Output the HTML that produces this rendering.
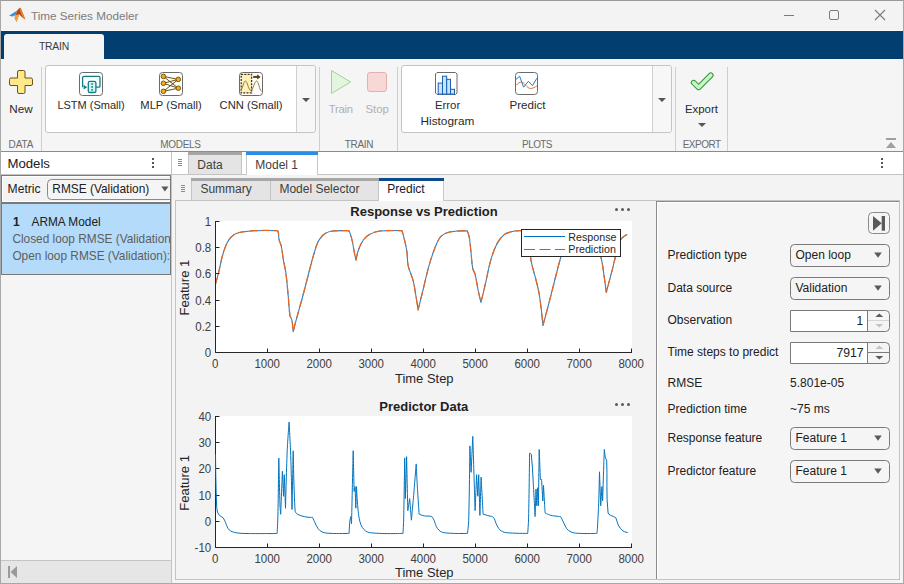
<!DOCTYPE html>
<html><head><meta charset="utf-8">
<style>
html,body{margin:0;padding:0;width:904px;height:584px;overflow:hidden;background:#f5f5f5}
svg{position:absolute;left:0;top:0;display:block}
text{font-family:"Liberation Sans",sans-serif}
</style></head>
<body>
<svg width="904" height="584" viewBox="0 0 904 584">
<!-- ===== window & title bar ===== -->
<rect x="0" y="0" width="904" height="584" fill="#f5f5f5"/>
<rect x="0" y="0" width="904" height="31" fill="#f3f3f3"/>
<rect x="0" y="30" width="904" height="1" fill="#fafafa"/>
<!-- matlab logo -->
<path d="M9 15.8 L14 12.6 L17.2 10.4 L15.6 15 L12.6 16.6 Z" fill="#3d8fd8"/>
<path d="M17.2 10.4 L19.3 7.9 Q20.3 7.3 21 8.8 L25.3 19.6 L22 17.2 L19.2 14.2 L16.5 22 L14.6 17.6 L15.6 15 Z" fill="#b8431a"/>
<path d="M19.3 7.9 Q20.3 7.3 21 8.8 L25.3 19.6 L22.6 17.6 L20.2 11.5 Z" fill="#e5802c"/>
<path d="M15.6 15 L19.2 14.2 L16.5 22 L14.6 17.6 Z" fill="#f2a43a"/>
<text x="31" y="20" font-size="11.7" fill="#7c7c7c">Time Series Modeler</text>
<!-- window controls -->
<rect x="784" y="15" width="10" height="1" fill="#7a7a7a"/>
<rect x="829.5" y="10.5" width="9" height="9" rx="1.5" fill="none" stroke="#7a7a7a" stroke-width="1"/>
<path d="M875 10 L885 20 M885 10 L875 20" stroke="#7a7a7a" stroke-width="1.1"/>

<!-- ===== blue tab strip ===== -->
<rect x="1" y="31" width="902" height="28" fill="#023e70"/>
<path d="M4 59 V37 Q4 34 7 34 H101 Q104 34 104 37 V59 Z" fill="#f5f5f5"/>
<text x="54" y="49.6" font-size="10.4" fill="#3a3a3a" text-anchor="middle" letter-spacing="-0.2">TRAIN</text>

<!-- ===== toolstrip ===== -->
<rect x="1" y="59" width="902" height="92" fill="#f5f5f5"/>
<rect x="1" y="151" width="902" height="1" fill="#8c8c8c"/>
<!-- separators -->
<rect x="41" y="67" width="1" height="84" fill="#cfcfcf"/>
<rect x="319" y="67" width="1" height="84" fill="#cfcfcf"/>
<rect x="397" y="67" width="1" height="84" fill="#cfcfcf"/>
<rect x="675" y="67" width="1" height="84" fill="#cfcfcf"/>
<rect x="727" y="67" width="1" height="84" fill="#cfcfcf"/>

<!-- DATA section -->
<path d="M17.5 72 Q17.5 70.5 19 70.5 H23.5 Q25 70.5 25 72 V78 H31 Q32.5 78 32.5 79.5 V84 Q32.5 85.5 31 85.5 H25 V92 Q25 93.5 23.5 93.5 H19 Q17.5 93.5 17.5 92 V85.5 H11 Q9.5 85.5 9.5 84 V79.5 Q9.5 78 11 78 H17.5 Z" fill="#fde88a" stroke="#6e5212" stroke-width="1"/>
<text x="21" y="112.7" font-size="11.7" fill="#2a2a2a" text-anchor="middle">New</text>
<text x="21" y="147.6" font-size="10" fill="#6a6a6a" text-anchor="middle" letter-spacing="-0.1">DATA</text>

<!-- MODELS gallery -->
<rect x="45.5" y="65.5" width="270" height="67" rx="2.5" fill="#ffffff" stroke="#c4c4c4"/>
<path d="M296 66 H312 Q315 66 315 69 V129 Q315 132 312 132 H296 Z" fill="#f7f7f7"/>
<rect x="296" y="66" width="1" height="66" fill="#d0d0d0"/>
<path d="M302 98 H310 L306 102 Z" fill="#555"/>

<!-- LSTM icon -->
<g transform="translate(79,72)">
  <rect x="0.5" y="0.5" width="23" height="23" rx="3" fill="#fff" stroke="#6a6a6a"/>
  <path d="M3.6 15.2 V5.8 Q3.6 4.4 5 4.4 H19.6 Q21 4.4 21 5.8 V14.2 Q21 15.2 20 15.2 H17" fill="none" stroke="#0f7f87" stroke-width="1.3"/>
  <path d="M4.6 12.8 L8.2 15.2 L4.6 17.6 Z" fill="#0f7f87"/>
  <rect x="9.3" y="9.3" width="7.6" height="11.2" rx="1.6" fill="#d6f4f4" stroke="#0f7f87" stroke-width="1.3"/>
  <rect x="12.3" y="11.2" width="1.6" height="1.6" fill="#0f7f87"/>
  <rect x="12.3" y="14.2" width="1.6" height="1.6" fill="#0f7f87"/>
  <rect x="12.3" y="17.1" width="1.6" height="1.6" fill="#0f7f87"/>
</g>
<text x="91" y="108.8" font-size="11" fill="#2a2a2a" text-anchor="middle">LSTM (Small)</text>

<!-- MLP icon -->
<g transform="translate(159,72)">
  <rect x="0.5" y="0.5" width="23" height="23" rx="3" fill="#fff" stroke="#6a6a6a"/>
  <g stroke="#5e4408" stroke-width="0.95" fill="none">
    <path d="M4.4 4.4 L19.3 7.4 M4.4 4.4 L19.3 16.2 M4.4 11.3 L19.3 7.4 M4.4 11.3 L19.3 16.2 M4.4 19.3 L19.3 7.4 M4.4 19.3 L19.3 16.2"/>
  </g>
  <g fill="#f0ae1a" stroke="#6a4c00" stroke-width="0.9">
    <circle cx="4.4" cy="4.4" r="2.3"/><circle cx="4.4" cy="11.3" r="2.3"/><circle cx="4.4" cy="19.3" r="2.3"/>
    <circle cx="19.3" cy="7.4" r="2.3"/><circle cx="19.3" cy="16.2" r="2.3"/>
  </g>
</g>
<text x="171" y="108.8" font-size="11.2" fill="#2a2a2a" text-anchor="middle">MLP (Small)</text>

<!-- CNN icon -->
<g transform="translate(239,72)">
  <rect x="0.5" y="0.5" width="23" height="23" rx="3" fill="#fff" stroke="#6a6a6a"/>
  <rect x="2.2" y="2.4" width="10.4" height="18.5" fill="#fdf0b8" stroke="#4a3208" stroke-width="1.3" stroke-dasharray="2 1.2"/>
  <path d="M1.5 18.5 C3.5 18 4.5 9 6.4 9 C8.3 9 9.5 18.5 12 18.5 C14 18.5 15.5 9 17.5 9 C19.5 9 20.5 18 22.6 19.5" fill="none" stroke="#8a7030" stroke-width="0.9"/>
  <path d="M14.2 4.9 H19" stroke="#5a3e0c" stroke-width="2"/>
  <path d="M18.2 2.3 L21.6 4.9 L18.2 7.5 Z" fill="#5a3e0c"/>
</g>
<text x="251" y="108.8" font-size="11.2" fill="#2a2a2a" text-anchor="middle">CNN (Small)</text>
<text x="180.5" y="147.6" font-size="10" fill="#6a6a6a" text-anchor="middle" letter-spacing="-0.3">MODELS</text>

<!-- TRAIN section -->
<path d="M331.5 70.5 L350.5 82 L331.5 93.5 Z" fill="#e3f5de" stroke="#9fd394" stroke-width="1"/>
<rect x="367.5" y="72.5" width="19" height="19" rx="2.5" fill="#f8d7d7" stroke="#e6b0b0"/>
<text x="340.8" y="112.7" font-size="11.3" fill="#b0b0b0" text-anchor="middle" letter-spacing="-0.2">Train</text>
<text x="377.2" y="112.7" font-size="11.4" fill="#b0b0b0" text-anchor="middle">Stop</text>
<text x="359" y="147.6" font-size="10" fill="#6a6a6a" text-anchor="middle" letter-spacing="-0.3">TRAIN</text>

<!-- PLOTS gallery -->
<rect x="401.5" y="65.5" width="270" height="67" rx="2.5" fill="#ffffff" stroke="#c4c4c4"/>
<path d="M652 66 H668 Q671 66 671 69 V129 Q671 132 668 132 H652 Z" fill="#f7f7f7"/>
<rect x="652" y="66" width="1" height="66" fill="#d0d0d0"/>
<path d="M658 98 H666 L662 102 Z" fill="#555"/>
<!-- histogram icon -->
<g transform="translate(435,72)">
  <path d="M0.5 2 L2 0.5 H20.5 L22 2 V21 L20.5 22.5 H2 L0.5 21 Z" fill="#fff" stroke="#6a6a6a"/>
  <g fill="#c6e4fb" stroke="#1a5fb4" stroke-width="1">
    <rect x="3.2" y="11.1" width="4.3" height="11"/>
    <rect x="7.5" y="4.2" width="4.2" height="17.9"/>
    <rect x="11.7" y="7.3" width="3.8" height="14.8"/>
    <rect x="15.5" y="17.3" width="4" height="4.8"/>
  </g>
</g>
<text x="447.6" y="108.7" font-size="11.4" fill="#2a2a2a" text-anchor="middle">Error</text>
<text x="447.4" y="125.1" font-size="11.8" fill="#2a2a2a" text-anchor="middle">Histogram</text>
<!-- predict icon -->
<g transform="translate(515,72)">
  <rect x="0.5" y="0.5" width="22" height="22" rx="3" fill="#fff" stroke="#6a6a6a"/>
  <path d="M1.1 13.4 C3 11 5 10.1 6.5 10.1 C9.5 10.1 12 16.5 15.5 16.5 C18 16.5 20 15 21.9 14" fill="none" stroke="#e0703c" stroke-width="1"/>
  <path d="M0.9 7.5 L4.6 4.2 L8.6 15.2 L13.4 9.3 L17.5 13.7 L21.9 6.2" fill="none" stroke="#1f7fd0" stroke-width="1"/>
</g>
<text x="527.5" y="108.7" font-size="11.6" fill="#2a2a2a" text-anchor="middle">Predict</text>
<text x="537" y="147.6" font-size="10" fill="#6a6a6a" text-anchor="middle" letter-spacing="-0.6">PLOTS</text>

<!-- EXPORT section -->
<path d="M693.6 82.6 L698.6 87.4 L710.8 75.2" fill="none" stroke="#34903e" stroke-width="5.6" stroke-linecap="round" stroke-linejoin="round"/>
<path d="M693.6 82.6 L698.6 87.4 L710.8 75.2" fill="none" stroke="#c8f6c2" stroke-width="3.6" stroke-linecap="round" stroke-linejoin="round"/>
<text x="701.4" y="112.7" font-size="11.4" fill="#2a2a2a" text-anchor="middle">Export</text>
<path d="M698 123 H706 L702 127 Z" fill="#555"/>
<text x="701.6" y="147.6" font-size="10" fill="#6a6a6a" text-anchor="middle" letter-spacing="-0.5">EXPORT</text>
<!-- collapse -->
<rect x="886" y="138" width="10" height="2" fill="#a0a0a0"/>
<path d="M886 148 L891 142 L896 148 Z" fill="#a0a0a0"/>

<!-- ===== left panel ===== -->
<rect x="1" y="152" width="170" height="22" fill="#ffffff"/>
<text x="7.4" y="167.8" font-size="13.2" fill="#212121">Models</text>
<rect x="152" y="158" width="2" height="2" fill="#555"/>
<rect x="152" y="162" width="2" height="2" fill="#555"/>
<rect x="152" y="166" width="2" height="2" fill="#555"/>
<rect x="1" y="174" width="903" height="1" fill="#c4c4c4"/>
<!-- metric box -->
<rect x="1" y="175" width="170" height="28" fill="#7a7a7a"/>
<rect x="2" y="176" width="168" height="26" fill="#ffffff"/>
<rect x="3" y="177" width="167" height="24" fill="#f3f3f3"/>
<text x="7.6" y="192.8" font-size="12.1" fill="#212121">Metric</text>
<rect x="47.5" y="179.5" width="135" height="20" rx="4" fill="#f5f5f5" stroke="#8a8a8a"/>
<text x="52.3" y="193" font-size="11.9" fill="#212121">RMSE (Validation)</text>
<path d="M161.3 186.4 H168.5 L164.9 191.4 Z" fill="#5a5a5a"/>
<rect x="170" y="175" width="1" height="28" fill="#7a7a7a"/>
<!-- list item -->
<rect x="1" y="203" width="170" height="72" fill="#7a7a7a"/>
<rect x="2" y="204" width="168" height="70" fill="#b4dcfa"/>
<g clip-path="url(#clipL)">
<text x="13" y="225.8" font-size="12" font-weight="bold" fill="#212121">1</text>
<text x="31.5" y="225.8" font-size="11.85" fill="#212121">ARMA Model</text>
<text x="12.4" y="242.5" font-size="11.85" fill="#5e5e5e">Closed loop RMSE (Validation)</text>
<text x="12.4" y="259.6" font-size="11.85" fill="#5e5e5e">Open loop RMSE (Validation): </text>
</g>
<clipPath id="clipL"><rect x="2" y="204" width="168" height="70"/></clipPath>
<!-- bottom bar -->
<rect x="1" y="560" width="170" height="1" fill="#c4c4c4"/>
<rect x="1" y="561" width="170" height="22" fill="#e6e6e6"/>
<rect x="8" y="566" width="2" height="12" fill="#9a9a9a"/>
<path d="M17 566 L10.5 572 L17 578 Z" fill="#9a9a9a"/>
<rect x="171" y="152" width="1" height="432" fill="#c4c4c4"/>

<!-- ===== document tabs ===== -->
<rect x="172" y="152" width="731" height="22" fill="#ffffff"/>
<g fill="#8c8c8c"><rect x="178" y="159" width="4" height="1"/><rect x="178" y="161" width="4" height="1"/><rect x="178" y="163" width="4" height="1"/><rect x="178" y="165" width="4" height="1"/></g>
<rect x="188" y="152" width="54" height="22" fill="#c4c4c4"/>
<rect x="189" y="155" width="52" height="19" fill="#e4e4e4"/>
<rect x="188" y="152" width="54" height="3" fill="#a6a6a6"/>
<text x="197.3" y="168.7" font-size="12" fill="#404040">Data</text>
<rect x="246" y="152" width="72" height="22" fill="#c8c8c8"/>
<rect x="247" y="155" width="70" height="20" fill="#ffffff"/>
<rect x="246" y="152" width="72" height="3" fill="#2b8de3"/>
<text x="255.3" y="168.7" font-size="12" fill="#404040">Model 1</text>
<g fill="#555"><rect x="881" y="158" width="2" height="2"/><rect x="881" y="162" width="2" height="2"/><rect x="881" y="166" width="2" height="2"/></g>

<!-- sub tabs -->
<rect x="172" y="175" width="731" height="25" fill="#f3f3f3"/>
<g fill="#8c8c8c"><rect x="181" y="185" width="4" height="1"/><rect x="181" y="187" width="4" height="1"/><rect x="181" y="189" width="4" height="1"/><rect x="181" y="191" width="4" height="1"/></g>
<rect x="191" y="178" width="80" height="22" fill="#c4c4c4"/>
<rect x="192" y="181" width="78" height="19" fill="#e4e4e4"/>
<rect x="191" y="178" width="80" height="3" fill="#a6a6a6"/>
<text x="200.4" y="192.8" font-size="12" fill="#404040">Summary</text>
<rect x="270" y="178" width="109" height="22" fill="#c4c4c4"/>
<rect x="271" y="181" width="107" height="19" fill="#e4e4e4"/>
<rect x="270" y="178" width="109" height="3" fill="#a6a6a6"/>
<text x="279.4" y="192.8" font-size="12" fill="#404040">Model Selector</text>
<rect x="379" y="178" width="65" height="23" fill="#c8c8c8"/>
<rect x="379" y="181" width="64" height="20" fill="#ffffff"/>
<rect x="379" y="178" width="65" height="3" fill="#0b4a8b"/>
<text x="387.3" y="192.8" font-size="12" fill="#1a1a2a">Predict</text>

<!-- ===== plot panel ===== -->
<rect x="175" y="200" width="725" height="380" fill="#c4c4c4"/>
<rect x="176" y="201" width="723" height="378" fill="#f3f3f3"/>
<rect x="379" y="200" width="64" height="1" fill="#ffffff"/>

<!-- plot 1 -->
<rect x="215.5" y="221" width="416.5" height="131.5" fill="#ffffff"/>
<text x="424" y="216.2" font-size="13" font-weight="bold" fill="#212121" text-anchor="middle">Response vs Prediction</text>
<g fill="#5a5a5a"><circle cx="616.5" cy="209.5" r="1.5"/><circle cx="622.5" cy="209.5" r="1.5"/><circle cx="628.5" cy="209.5" r="1.5"/></g>
<g clip-path="url(#clipA1)">
<path d="M215.0 285.8 C215.0 285.8 217.6 276.7 218.7 272.1 C220.0 266.8 220.9 261.3 222.4 256.0 C223.8 251.3 225.1 246.6 227.4 242.3 C228.9 239.5 231.0 236.7 233.6 234.9 C236.1 233.1 239.3 232.5 242.3 231.9 C246.4 231.1 250.5 230.8 254.7 230.7 C262.2 230.4 269.7 230.2 277.1 230.7 C277.8 230.7 278.2 231.7 278.3 232.4 C278.8 234.8 278.6 237.4 279.1 239.8 C279.6 241.9 280.8 243.9 281.3 246.0 C282.3 250.5 282.5 255.2 283.3 259.7 C284.0 263.9 285.2 267.9 285.8 272.1 C286.9 280.4 287.5 288.7 288.3 297.0 C288.9 303.2 289.0 309.4 290.0 315.6 C290.3 317.4 291.7 318.8 292.0 320.6 C292.7 324.3 293.2 331.8 293.2 331.8 C293.2 331.8 294.8 325.1 295.7 321.8 C298.1 312.7 300.8 303.6 303.2 294.5 C306.2 283.4 308.9 272.1 311.9 261.0 C313.4 255.6 314.9 250.1 316.8 244.8 C317.6 242.6 318.6 240.5 320.0 238.6 C321.4 236.7 323.0 234.8 325.0 233.6 C327.2 232.3 329.8 231.4 332.4 231.1 C337.8 230.4 348.6 230.7 348.6 230.7 C348.6 230.7 349.6 231.7 349.8 232.4 C350.8 235.2 351.6 238.2 352.3 241.1 C353.1 244.8 353.6 248.6 354.3 252.3 C354.8 254.9 356.0 260.2 356.0 260.2 C356.0 260.2 357.3 253.1 358.5 249.8 C359.8 246.3 361.3 242.8 363.5 239.8 C365.1 237.6 367.3 235.7 369.7 234.4 C372.8 232.7 376.1 231.5 379.6 231.1 C387.0 230.3 402.0 230.7 402.0 230.7 C402.0 230.7 403.8 236.7 404.5 239.8 C405.5 243.9 406.4 248.1 407.0 252.3 C407.6 256.8 407.2 261.5 408.2 265.9 C409.3 271.0 411.9 275.7 413.2 280.8 C414.4 285.3 414.9 289.9 415.7 294.5 C416.6 299.6 418.1 309.9 418.1 309.9 C418.1 309.9 420.6 299.6 421.9 294.5 C424.4 284.6 426.5 274.5 429.3 264.7 C431.2 258.0 433.5 251.3 436.2 244.8 C437.5 241.7 438.8 238.4 441.2 236.1 C443.5 233.9 446.7 232.6 449.9 231.9 C455.6 230.7 467.3 230.7 467.3 230.7 C467.3 230.7 468.9 235.1 469.3 237.4 C470.1 242.3 470.5 247.3 471.0 252.3 C471.6 257.7 471.7 263.1 472.7 268.4 C473.1 270.6 474.7 272.4 475.2 274.6 C476.4 279.5 477.0 284.5 478.0 289.5 C478.9 293.8 480.9 302.5 480.9 302.5 C480.9 302.5 483.5 292.2 484.7 287.0 C486.8 277.9 488.3 268.7 490.9 259.7 C492.5 254.2 494.4 248.7 497.1 243.6 C499.0 240.1 501.3 236.7 504.5 234.4 C507.4 232.4 511.1 231.8 514.5 231.1 C516.9 230.6 519.4 230.8 521.9 230.7 C523.9 230.6 528.0 230.7 528.0 230.7 C528.0 230.7 529.0 240.2 529.5 245.0 C529.9 249.1 530.1 253.1 530.6 257.2 C530.9 259.7 531.3 262.2 531.9 264.7 C533.0 269.3 534.5 273.8 535.6 278.4 C536.9 283.7 538.4 289.1 539.3 294.5 C540.9 304.7 543.0 325.4 543.0 325.4 C543.0 325.4 547.6 308.1 549.9 299.4 C553.7 284.9 557.0 270.4 561.1 256.0 C562.4 251.5 563.9 247.1 566.0 243.0 C567.5 240.0 569.4 237.1 572.0 235.0 C574.2 233.2 577.1 232.0 580.0 231.5 C585.9 230.5 598.0 230.7 598.0 230.7 C598.0 230.7 599.6 238.2 600.0 242.0 C600.5 246.6 600.3 251.4 600.8 256.0 C601.1 258.9 602.1 261.7 602.5 264.6 C603.9 273.8 606.3 292.4 606.3 292.4 C606.3 292.4 610.1 278.0 612.0 270.8 C613.3 265.9 614.3 260.9 615.7 256.0 C617.2 250.6 618.3 245.0 620.6 239.8 C621.3 238.2 623.0 237.2 624.4 236.1 C625.3 235.4 627.3 234.4 627.3 234.4" fill="none" stroke="#1a7fd0" stroke-width="1.05" stroke-linejoin="round"/>
<path d="M215.0 285.8 C215.0 285.8 217.6 276.7 218.7 272.1 C220.0 266.8 220.9 261.3 222.4 256.0 C223.8 251.3 225.1 246.6 227.4 242.3 C228.9 239.5 231.0 236.7 233.6 234.9 C236.1 233.1 239.3 232.5 242.3 231.9 C246.4 231.1 250.5 230.8 254.7 230.7 C262.2 230.4 269.7 230.2 277.1 230.7 C277.8 230.7 278.2 231.7 278.3 232.4 C278.8 234.8 278.6 237.4 279.1 239.8 C279.6 241.9 280.8 243.9 281.3 246.0 C282.3 250.5 282.5 255.2 283.3 259.7 C284.0 263.9 285.2 267.9 285.8 272.1 C286.9 280.4 287.5 288.7 288.3 297.0 C288.9 303.2 289.0 309.4 290.0 315.6 C290.3 317.4 291.7 318.8 292.0 320.6 C292.7 324.3 293.2 331.8 293.2 331.8 C293.2 331.8 294.8 325.1 295.7 321.8 C298.1 312.7 300.8 303.6 303.2 294.5 C306.2 283.4 308.9 272.1 311.9 261.0 C313.4 255.6 314.9 250.1 316.8 244.8 C317.6 242.6 318.6 240.5 320.0 238.6 C321.4 236.7 323.0 234.8 325.0 233.6 C327.2 232.3 329.8 231.4 332.4 231.1 C337.8 230.4 348.6 230.7 348.6 230.7 C348.6 230.7 349.6 231.7 349.8 232.4 C350.8 235.2 351.6 238.2 352.3 241.1 C353.1 244.8 353.6 248.6 354.3 252.3 C354.8 254.9 356.0 260.2 356.0 260.2 C356.0 260.2 357.3 253.1 358.5 249.8 C359.8 246.3 361.3 242.8 363.5 239.8 C365.1 237.6 367.3 235.7 369.7 234.4 C372.8 232.7 376.1 231.5 379.6 231.1 C387.0 230.3 402.0 230.7 402.0 230.7 C402.0 230.7 403.8 236.7 404.5 239.8 C405.5 243.9 406.4 248.1 407.0 252.3 C407.6 256.8 407.2 261.5 408.2 265.9 C409.3 271.0 411.9 275.7 413.2 280.8 C414.4 285.3 414.9 289.9 415.7 294.5 C416.6 299.6 418.1 309.9 418.1 309.9 C418.1 309.9 420.6 299.6 421.9 294.5 C424.4 284.6 426.5 274.5 429.3 264.7 C431.2 258.0 433.5 251.3 436.2 244.8 C437.5 241.7 438.8 238.4 441.2 236.1 C443.5 233.9 446.7 232.6 449.9 231.9 C455.6 230.7 467.3 230.7 467.3 230.7 C467.3 230.7 468.9 235.1 469.3 237.4 C470.1 242.3 470.5 247.3 471.0 252.3 C471.6 257.7 471.7 263.1 472.7 268.4 C473.1 270.6 474.7 272.4 475.2 274.6 C476.4 279.5 477.0 284.5 478.0 289.5 C478.9 293.8 480.9 302.5 480.9 302.5 C480.9 302.5 483.5 292.2 484.7 287.0 C486.8 277.9 488.3 268.7 490.9 259.7 C492.5 254.2 494.4 248.7 497.1 243.6 C499.0 240.1 501.3 236.7 504.5 234.4 C507.4 232.4 511.1 231.8 514.5 231.1 C516.9 230.6 519.4 230.8 521.9 230.7 C523.9 230.6 528.0 230.7 528.0 230.7 C528.0 230.7 529.0 240.2 529.5 245.0 C529.9 249.1 530.1 253.1 530.6 257.2 C530.9 259.7 531.3 262.2 531.9 264.7 C533.0 269.3 534.5 273.8 535.6 278.4 C536.9 283.7 538.4 289.1 539.3 294.5 C540.9 304.7 543.0 325.4 543.0 325.4 C543.0 325.4 547.6 308.1 549.9 299.4 C553.7 284.9 557.0 270.4 561.1 256.0 C562.4 251.5 563.9 247.1 566.0 243.0 C567.5 240.0 569.4 237.1 572.0 235.0 C574.2 233.2 577.1 232.0 580.0 231.5 C585.9 230.5 598.0 230.7 598.0 230.7 C598.0 230.7 599.6 238.2 600.0 242.0 C600.5 246.6 600.3 251.4 600.8 256.0 C601.1 258.9 602.1 261.7 602.5 264.6 C603.9 273.8 606.3 292.4 606.3 292.4 C606.3 292.4 610.1 278.0 612.0 270.8 C613.3 265.9 614.3 260.9 615.7 256.0 C617.2 250.6 618.3 245.0 620.6 239.8 C621.3 238.2 623.0 237.2 624.4 236.1 C625.3 235.4 627.3 234.4 627.3 234.4" fill="none" stroke="#e8661e" stroke-width="1.25" stroke-dasharray="8 4" stroke-linejoin="round"/>
</g>
<clipPath id="clipA1"><rect x="215" y="221" width="418" height="132"/></clipPath>
<path d="M215.5 221 V352.5 H632 M215.5 352.5 V348.5 M267.5 352.5 V348.5 M319.5 352.5 V348.5 M371.5 352.5 V348.5 M423.5 352.5 V348.5 M475.5 352.5 V348.5 M527.5 352.5 V348.5 M579.5 352.5 V348.5 M631.5 352.5 V348.5  M215.5 352.5 H219.5 M215.5 326.5 H219.5 M215.5 300.5 H219.5 M215.5 273.5 H219.5 M215.5 247.5 H219.5 M215.5 221.5 H219.5 " fill="none" stroke="#262626" stroke-width="1"/>
<g font-size="13.2" fill="#404040"><text transform="translate(215.2,368.1) scale(0.87,1)" text-anchor="middle">0</text><text transform="translate(267.2,368.1) scale(0.87,1)" text-anchor="middle">1000</text><text transform="translate(319.2,368.1) scale(0.87,1)" text-anchor="middle">2000</text><text transform="translate(371.2,368.1) scale(0.87,1)" text-anchor="middle">3000</text><text transform="translate(423.2,368.1) scale(0.87,1)" text-anchor="middle">4000</text><text transform="translate(475.2,368.1) scale(0.87,1)" text-anchor="middle">5000</text><text transform="translate(527.2,368.1) scale(0.87,1)" text-anchor="middle">6000</text><text transform="translate(579.2,368.1) scale(0.87,1)" text-anchor="middle">7000</text><text transform="translate(631.2,368.1) scale(0.87,1)" text-anchor="middle">8000</text><text transform="translate(211.2,356.9) scale(0.87,1)" text-anchor="end">0</text><text transform="translate(211.2,330.9) scale(0.87,1)" text-anchor="end">0.2</text><text transform="translate(211.2,304.9) scale(0.87,1)" text-anchor="end">0.4</text><text transform="translate(211.2,277.9) scale(0.87,1)" text-anchor="end">0.6</text><text transform="translate(211.2,251.9) scale(0.87,1)" text-anchor="end">0.8</text><text transform="translate(211.2,225.9) scale(0.87,1)" text-anchor="end">1</text></g>
<text x="424.3" y="382.7" font-size="12.95" fill="#262626" text-anchor="middle">Time Step</text>
<text transform="translate(188.6,287.6) rotate(-90)" font-size="13" fill="#262626" text-anchor="middle">Feature 1</text>
<!-- legend -->
<rect x="521.5" y="229.5" width="99" height="27" fill="#ffffff" stroke="#262626" stroke-width="1"/>
<path d="M524 236.5 H565" stroke="#0072bd" stroke-width="1.1"/>
<path d="M524 249.5 H565" stroke="#d95319" stroke-width="1.1" stroke-dasharray="11 4.5"/>
<text x="568.3" y="240.7" font-size="10.7" fill="#262626">Response</text>
<text x="568.3" y="252.7" font-size="10.7" fill="#262626">Prediction</text>

<!-- plot 2 -->
<rect x="215.5" y="416" width="416.5" height="131" fill="#ffffff"/>
<text x="423.8" y="410.9" font-size="13" font-weight="bold" fill="#212121" text-anchor="middle">Predictor Data</text>
<g fill="#5a5a5a"><circle cx="616.5" cy="404.5" r="1.5"/><circle cx="622.5" cy="404.5" r="1.5"/><circle cx="628.5" cy="404.5" r="1.5"/></g>
<path d="M215.5 416 V547.5 H632 M215.5 547.5 V543.5 M267.5 547.5 V543.5 M319.5 547.5 V543.5 M371.5 547.5 V543.5 M423.5 547.5 V543.5 M475.5 547.5 V543.5 M527.5 547.5 V543.5 M579.5 547.5 V543.5 M631.5 547.5 V543.5  M215.5 547.5 H219.5 M215.5 521.5 H219.5 M215.5 495.5 H219.5 M215.5 468.5 H219.5 M215.5 442.5 H219.5 M215.5 416.5 H219.5 " fill="none" stroke="#262626" stroke-width="1"/>
<g clip-path="url(#clipA2)">
<path d="M215.5 454.4 C215.5 454.4 215.7 471.5 215.9 480.0 C216.1 488.3 216.2 496.7 216.6 505.0 C216.7 507.3 216.9 509.7 217.5 512.0 C217.9 513.3 218.7 514.5 219.6 515.5 C220.6 516.5 222.3 516.8 223.2 517.9 C224.3 519.3 224.8 521.1 225.6 522.7 C226.8 525.1 227.2 528.1 229.2 529.9 C231.1 531.7 233.9 532.3 236.4 532.8 C239.5 533.5 242.8 533.4 246.0 533.5 C256.4 533.7 277.1 533.5 277.1 533.5 C277.1 533.5 277.8 521.5 277.9 515.5 C278.3 496.3 278.8 458.0 278.8 458.0 C278.8 458.0 279.5 489.9 280.0 505.9 C280.1 508.7 280.7 514.3 280.7 514.3 C280.7 514.3 282.4 471.2 282.4 471.2 C282.4 471.2 283.6 496.3 283.6 496.3 C283.6 496.3 284.3 474.7 284.3 474.7 C284.3 474.7 285.5 508.3 285.5 508.3 C285.5 508.3 286.4 470.0 287.2 450.8 C287.6 441.2 289.1 422.0 289.1 422.0 C289.1 422.0 290.4 446.0 290.8 458.0 C291.4 475.2 292.0 509.5 292.0 509.5 C292.0 509.5 293.2 450.8 293.2 450.8 C293.2 450.8 293.8 490.8 295.1 510.7 C295.2 512.1 296.3 513.5 297.5 514.3 C299.6 515.6 302.2 516.1 304.7 516.7 C306.4 517.1 308.2 517.3 310.0 517.4 C310.8 517.5 312.5 517.3 312.5 517.3 C312.5 517.3 313.7 520.0 314.4 521.4 C315.6 523.8 316.4 526.5 318.0 528.6 C319.2 530.2 320.9 531.5 322.8 532.2 C325.4 533.2 328.3 533.3 331.1 533.4 C337.1 533.7 349.1 533.4 349.1 533.4 C349.1 533.4 349.4 525.4 349.8 521.4 C350.0 519.8 350.8 516.6 350.8 516.6 C350.8 516.6 351.5 523.8 351.5 523.8 C351.5 523.8 352.0 503.8 352.2 493.8 C352.5 479.4 353.2 450.7 353.2 450.7 C353.2 450.7 354.1 491.4 354.1 491.4 C354.1 491.4 355.1 486.6 355.1 486.6 C355.1 486.6 355.8 508.2 355.8 508.2 C355.8 508.2 356.5 486.6 356.5 486.6 C356.5 486.6 357.3 505.9 358.7 515.4 C359.3 519.5 360.1 523.9 362.3 527.4 C363.9 529.9 366.6 532.2 369.5 532.6 C380.6 534.2 403.0 533.4 403.0 533.4 C403.0 533.4 403.6 523.0 403.7 517.8 C404.1 497.8 404.7 457.9 404.7 457.9 C404.7 457.9 405.4 498.6 405.4 498.6 C405.4 498.6 406.6 456.7 406.6 456.7 C406.6 456.7 407.8 510.6 407.8 510.6 C407.8 510.6 409.7 498.6 409.7 498.6 C409.7 498.6 411.4 520.2 411.4 520.2 C411.4 520.2 413.0 502.6 413.8 493.8 C414.6 483.8 416.2 463.9 416.2 463.9 C416.2 463.9 416.8 477.5 417.2 484.3 C417.8 494.3 419.1 514.2 419.1 514.2 C419.1 514.2 422.6 515.6 424.4 515.9 C426.8 516.4 429.4 515.6 431.6 516.6 C432.9 517.2 433.4 518.9 434.0 520.2 C435.3 522.9 435.7 526.2 437.5 528.6 C439.0 530.5 441.1 532.2 443.5 532.6 C451.4 533.9 467.5 533.4 467.5 533.4 C467.5 533.4 468.6 524.6 468.7 520.2 C469.4 495.4 469.9 445.9 469.9 445.9 C469.9 445.9 471.1 472.3 471.1 472.3 C471.1 472.3 472.8 436.3 472.8 436.3 C472.8 436.3 473.7 466.7 474.2 481.9 C474.5 491.5 475.1 510.6 475.1 510.6 C475.1 510.6 476.6 474.7 476.6 474.7 C476.6 474.7 477.8 496.2 477.8 496.2 C477.8 496.2 478.7 474.7 478.7 474.7 C478.7 474.7 479.9 515.4 479.9 515.4 C479.9 515.4 481.1 477.1 481.1 477.1 C481.1 477.1 483.1 514.2 483.1 514.2 C483.1 514.2 487.0 515.3 489.0 515.9 C490.5 516.3 492.4 516.2 493.4 517.3 C495.0 519.0 495.1 521.7 496.2 523.8 C497.3 525.9 498.1 528.2 499.8 529.8 C501.4 531.3 503.6 532.3 505.8 532.6 C513.0 533.5 527.7 533.4 527.7 533.4 C527.7 533.4 528.5 523.0 528.6 517.8 C529.1 496.2 529.6 453.1 529.6 453.1 C529.6 453.1 531.2 453.6 531.3 454.3 C532.4 463.5 532.6 472.7 533.2 481.9 C533.9 493.5 535.1 516.6 535.1 516.6 C535.1 516.6 536.0 489.0 536.0 489.0 C536.0 489.0 536.8 505.8 536.8 505.8 C536.8 505.8 537.5 487.8 537.5 487.8 C537.5 487.8 538.4 505.8 538.4 505.8 C538.4 505.8 539.2 449.5 539.2 449.5 C539.2 449.5 540.4 479.5 540.4 479.5 C540.4 479.5 541.6 479.5 541.6 479.5 C541.6 479.5 542.8 501.0 542.8 501.0 C542.8 501.0 543.5 485.4 543.5 485.4 C543.5 485.4 545.1 513.0 545.1 513.0 C545.1 513.0 549.0 514.9 551.1 515.4 C554.2 516.1 560.7 516.6 560.7 516.6 C560.7 516.6 562.3 519.8 563.1 521.4 C564.3 523.8 565.1 526.5 566.7 528.6 C567.9 530.2 569.6 531.5 571.5 532.2 C574.2 533.2 577.1 533.3 579.9 533.4 C585.6 533.7 597.1 533.4 597.1 533.4 C597.1 533.4 598.2 515.0 598.6 505.8 C599.0 494.5 599.5 471.8 599.5 471.8 C599.5 471.8 600.7 505.8 600.7 505.8 C600.7 505.8 601.9 486.6 601.9 486.6 C601.9 486.6 602.6 501.0 602.6 501.0 C602.6 501.0 604.3 449.5 604.3 449.5 C604.3 449.5 604.9 455.1 605.5 457.9 C605.7 458.8 606.7 459.4 606.7 460.3 C607.5 477.9 606.0 495.6 608.1 513.0 C608.4 515.1 611.6 515.5 613.4 516.6 C614.2 517.1 615.4 517.0 615.8 517.8 C617.1 520.0 617.0 522.8 618.2 525.0 C619.4 527.2 621.0 529.4 623.0 531.0 C624.3 532.0 627.8 532.6 627.8 532.6" fill="none" stroke="#0072bd" stroke-width="1" stroke-linejoin="round"/>
</g>
<clipPath id="clipA2"><rect x="215" y="416" width="418" height="132"/></clipPath>
<g font-size="13.2" fill="#404040"><text transform="translate(215.2,563.3) scale(0.87,1)" text-anchor="middle">0</text><text transform="translate(267.2,563.3) scale(0.87,1)" text-anchor="middle">1000</text><text transform="translate(319.2,563.3) scale(0.87,1)" text-anchor="middle">2000</text><text transform="translate(371.2,563.3) scale(0.87,1)" text-anchor="middle">3000</text><text transform="translate(423.2,563.3) scale(0.87,1)" text-anchor="middle">4000</text><text transform="translate(475.2,563.3) scale(0.87,1)" text-anchor="middle">5000</text><text transform="translate(527.2,563.3) scale(0.87,1)" text-anchor="middle">6000</text><text transform="translate(579.2,563.3) scale(0.87,1)" text-anchor="middle">7000</text><text transform="translate(631.2,563.3) scale(0.87,1)" text-anchor="middle">8000</text><text transform="translate(211.2,551.9) scale(0.87,1)" text-anchor="end">-10</text><text transform="translate(211.2,525.9) scale(0.87,1)" text-anchor="end">0</text><text transform="translate(211.2,499.9) scale(0.87,1)" text-anchor="end">10</text><text transform="translate(211.2,472.9) scale(0.87,1)" text-anchor="end">20</text><text transform="translate(211.2,446.9) scale(0.87,1)" text-anchor="end">30</text><text transform="translate(211.2,420.9) scale(0.87,1)" text-anchor="end">40</text></g>
<g clip-path="url(#clipP)">
<text x="424.3" y="577.3" font-size="12.95" fill="#262626" text-anchor="middle">Time Step</text>
</g>
<clipPath id="clipP"><rect x="176" y="201" width="480" height="378"/></clipPath>
<text transform="translate(188.6,482.9) rotate(-90)" font-size="13" fill="#262626" text-anchor="middle">Feature 1</text>

<!-- ===== right panel ===== -->
<rect x="656" y="201" width="243" height="378" fill="#8a8a8a"/>
<rect x="657" y="202" width="242" height="377" fill="#ffffff"/>
<rect x="658" y="203" width="241" height="376" fill="#f5f5f5"/>
<!-- next button -->
<rect x="868.5" y="212.5" width="21" height="21" rx="4" fill="#f5f5f5" stroke="#8a8a8a"/>
<path d="M873 216 L881.7 223.3 L873 230.7 Z" fill="#5a5a5a"/>
<rect x="881.7" y="216" width="3.3" height="14.7" fill="#5a5a5a"/>
<g font-size="12" fill="#212121">
<text x="667.5" y="259">Prediction type</text>
<text x="667.5" y="292">Data source</text>
<text x="667.5" y="324.3">Observation</text>
<text x="667.5" y="355.9">Time steps to predict</text>
<text x="667.5" y="386.5">RMSE</text>
<text x="667.5" y="413">Prediction time</text>
<text x="667.5" y="442.2">Response feature</text>
<text x="667.5" y="475.4">Predictor feature</text>
<text x="790.1" y="386.5">5.801e-05</text>
<text x="790.1" y="413">~75 ms</text>
</g>
<!-- dropdowns -->
<g fill="#f5f5f5" stroke="#7a7a7a" stroke-width="1">
<rect x="790.5" y="244.5" width="99" height="22" rx="4"/>
<rect x="790.5" y="277.5" width="99" height="22" rx="4"/>
<rect x="790.5" y="427.5" width="99" height="22" rx="4"/>
<rect x="790.5" y="460.5" width="99" height="22" rx="4"/>
</g>
<g font-size="12" fill="#212121">
<text x="795.5" y="259">Open loop</text>
<text x="795.5" y="291.7">Validation</text>
<text x="795.5" y="442.2">Feature 1</text>
<text x="795.5" y="475.4">Feature 1</text>
</g>
<g fill="#5a5a5a">
<path d="M874.2 252.5 H881.8 L878 257.8 Z"/>
<path d="M874.2 285.5 H881.8 L878 290.8 Z"/>
<path d="M874.2 435.5 H881.8 L878 440.8 Z"/>
<path d="M874.2 468.5 H881.8 L878 473.8 Z"/>
</g>
<!-- spinners -->
<path d="M790.5 310.5 H885.5 Q889.5 310.5 889.5 314.5 V327.5 Q889.5 331.5 885.5 331.5 H790.5 Z" fill="#f5f5f5" stroke="#7a7a7a"/>
<rect x="791" y="311" width="76" height="20" fill="#ffffff"/>
<rect x="867" y="311" width="1" height="20" fill="#7a7a7a"/>
<rect x="868" y="320" width="21" height="1" fill="#d4d4d4"/>
<path d="M875.3 317 L879.3 313.5 L883.3 317 Z" fill="#5a5a5a"/>
<path d="M875.3 324 L879.3 327.5 L883.3 324 Z" fill="#c4c4c4"/>
<text x="863.3" y="324.9" font-size="12" fill="#212121" text-anchor="end">1</text>

<path d="M790.5 342.5 H885.5 Q889.5 342.5 889.5 346.5 V359.5 Q889.5 363.5 885.5 363.5 H790.5 Z" fill="#f5f5f5" stroke="#7a7a7a"/>
<rect x="791" y="343" width="76" height="20" fill="#ffffff"/>
<rect x="867" y="343" width="1" height="20" fill="#7a7a7a"/>
<rect x="868" y="352" width="21" height="1" fill="#7a7a7a"/>
<path d="M875.3 349 L879.3 345.5 L883.3 349 Z" fill="#c4c4c4"/>
<path d="M875.3 356 L879.3 359.5 L883.3 356 Z" fill="#5a5a5a"/>
<text x="863.5" y="356.6" font-size="12.2" fill="#212121" text-anchor="end">7917</text>

<!-- window border -->
<rect x="0" y="0" width="904" height="1" fill="#9a9a9a"/>
<rect x="0" y="0" width="1" height="584" fill="#a8a8a8"/>
<rect x="903" y="0" width="1" height="584" fill="#a8a8a8"/>
<rect x="0" y="583" width="904" height="1" fill="#a8a8a8"/>
</svg>
</body></html>
